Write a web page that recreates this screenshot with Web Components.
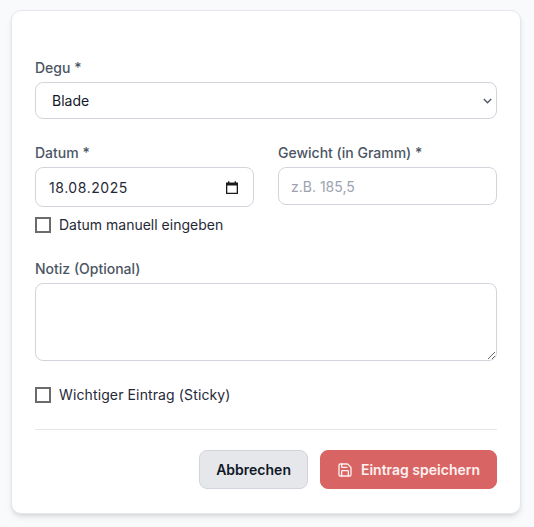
<!DOCTYPE html>
<html lang="de">
<head>
<meta charset="utf-8">
<title>Eintrag</title>
<style>
  html, body { margin: 0; background: #f9fafb; }
  body { padding: 10px 13px 13px 11px; font-family: Inter, "Liberation Sans", sans-serif; font-size: 14px; color: #111827; }
</style>
</head>
<body>
<entry-card>
  <form-field label="Degu *">
    <select>
      <option>Blade</option>
    </select>
  </form-field>
  <field-row>
    <div>
      <form-field label="Datum *" tight>
        <date-box value="18.08.2025"></date-box>
      </form-field>
      <check-field>Datum manuell eingeben</check-field>
    </div>
    <form-field label="Gewicht (in Gramm) *" tight>
      <input type="text" placeholder="z.B. 185,5">
    </form-field>
  </field-row>
  <form-field label="Notiz (Optional)">
    <textarea></textarea>
  </form-field>
  <check-field strong>Wichtiger Eintrag (Sticky)</check-field>
  <form-actions>
    <action-button>Abbrechen</action-button>
    <action-button primary>
      <svg slot="icon" xmlns="http://www.w3.org/2000/svg" width="16" height="16" viewBox="0 0 24 24" fill="none" stroke="currentColor" stroke-width="2" stroke-linecap="round" stroke-linejoin="round"><path d="M15.2 3a2 2 0 0 1 1.4.6l3.8 3.8a2 2 0 0 1 .6 1.4V19a2 2 0 0 1-2 2H5a2 2 0 0 1-2-2V5a2 2 0 0 1 2-2z"/><path d="M17 21v-7a1 1 0 0 0-1-1H8a1 1 0 0 0-1 1v7"/><path d="M7 3v4a1 1 0 0 0 1 1h7"/></svg>
      Eintrag speichern
    </action-button>
  </form-actions>
</entry-card>

<script>
"use strict";
const controlCss = `
  box-sizing: border-box;
  display: block;
  width: 100%;
  background: #fff;
  border: 1px solid #d1d5db;
  border-radius: 8px;
  font: inherit;
  color: #111827;
`;
const chevron = "url(\"data:image/svg+xml,%3Csvg xmlns='http://www.w3.org/2000/svg' width='9' height='6' viewBox='0 0 9 6'%3E%3Cpath d='M.8 1l3.7 3.7L8.200 1' fill='none' stroke='%23555b66' stroke-width='1.5'/%3E%3C/svg%3E\")";

class EntryCard extends HTMLElement {
  constructor() {
    super();
    this.attachShadow({ mode: 'open' }).innerHTML = `
      <style>
        :host {
          box-sizing: border-box;
          display: flex;
          flex-direction: column;
          height: 504px;
          padding: 47px 23px 24px;
          background: #fff;
          border: 1px solid #e5e7eb;
          border-radius: 10px;
          box-shadow: 0 4px 6px -1px rgba(0,0,0,.1), 0 2px 4px -1px rgba(0,0,0,.06);
        }
      </style>
      <slot></slot>`;
  }
}

class FormField extends HTMLElement {
  constructor() {
    super();
    this.attachShadow({ mode: 'open' }).innerHTML = `
      <style>
        :host { display: block; margin-bottom: 24px; }
        :host([tight]) { margin-bottom: 8px; }
        label {
          display: block;
          margin-bottom: 4px;
          line-height: 20px;
          font-weight: 450;
          color: #4b5563;
        }
        ::slotted(select), ::slotted(input) { ${controlCss} height: 38px; padding: 0 12px; outline: none; }
        ::slotted(select) {
          appearance: none;
          height: 37px;
          padding-left: 16px;
          background: #fff ${chevron} no-repeat right 4px center;
        }
        ::slotted(input)::placeholder { color: #9ca3af; }
        ::slotted(textarea) { ${controlCss} height: 78px; resize: vertical; outline: none; }
      </style>
      <label></label>
      <slot></slot>`;
    this.shadowRoot.querySelector('label').textContent = this.getAttribute('label');
  }
}

class FieldRow extends HTMLElement {
  constructor() {
    super();
    this.attachShadow({ mode: 'open' }).innerHTML = `
      <style>
        :host { display: grid; grid-template-columns: 1fr 1fr; column-gap: 24px; align-items: start; margin-bottom: 24px; }
      </style>
      <slot></slot>`;
  }
}

class DateBox extends HTMLElement {
  constructor() {
    super();
    this.attachShadow({ mode: 'open' }).innerHTML = `
      <style>
        :host {
          ${controlCss}
          display: flex;
          align-items: center;
          justify-content: space-between;
          height: 40px;
          padding: 0 15px 0 13px;
          letter-spacing: .55px;
          color: #1f2937;
        }
        svg { display: block; }
      </style>
      <span></span>
      <svg xmlns="http://www.w3.org/2000/svg" width="12" height="13" viewBox="0 0 12 13"><path fill="#1a1a1a" d="M0 1.500h2V.3h1.300v1.200h5.400V.3H10v1.200h2V13H0zM1.300 4.500v7.200h9.400V4.500z"/></svg>`;
    this.shadowRoot.querySelector('span').textContent = this.getAttribute('value');
  }
}

class CheckField extends HTMLElement {
  constructor() {
    super();
    this.attachShadow({ mode: 'open' }).innerHTML = `
      <style>
        :host { display: block; }
        :host([strong]) { letter-spacing: .12px; }
        label { display: flex; align-items: center; gap: 8px; line-height: 20px; color: #1f2937; }
        input {
          appearance: none;
          box-sizing: border-box;
          width: 16px;
          height: 16px;
          margin: 0;
          background: #fff;
          border: 2px solid #6b6b6b;
          border-radius: 0;
        }
      </style>
      <label><input type="checkbox"><span><slot></slot></span></label>`;
  }
}

class FormActions extends HTMLElement {
  constructor() {
    super();
    this.attachShadow({ mode: 'open' }).innerHTML = `
      <style>
        :host {
          display: flex;
          justify-content: flex-end;
          gap: 12px;
          padding-top: 20px;
          margin-top: 24px;
          border-top: 1px solid #e5e7eb;
        }
      </style>
      <slot></slot>`;
  }
}

class ActionButton extends HTMLElement {
  constructor() {
    super();
    this.attachShadow({ mode: 'open' }).innerHTML = `
      <style>
        :host {
          box-sizing: border-box;
          display: inline-flex;
          align-items: center;
          gap: 8px;
          height: 39px;
          padding: 0 16px;
          background: #e5e7eb;
          border: 1px solid #d1d5db;
          border-radius: 8px;
          font-weight: 600;
          color: #111827;
        }
        :host([primary]) { background: #d96464; border-color: #d96464; color: #fdf1f1; }
        ::slotted(svg) { display: block; }
      </style>
      <slot name="icon"></slot>
      <slot></slot>`;
  }
}

customElements.define('entry-card', EntryCard);
customElements.define('form-field', FormField);
customElements.define('field-row', FieldRow);
customElements.define('date-box', DateBox);
customElements.define('check-field', CheckField);
customElements.define('form-actions', FormActions);
customElements.define('action-button', ActionButton);
</script>
</body>
</html>
